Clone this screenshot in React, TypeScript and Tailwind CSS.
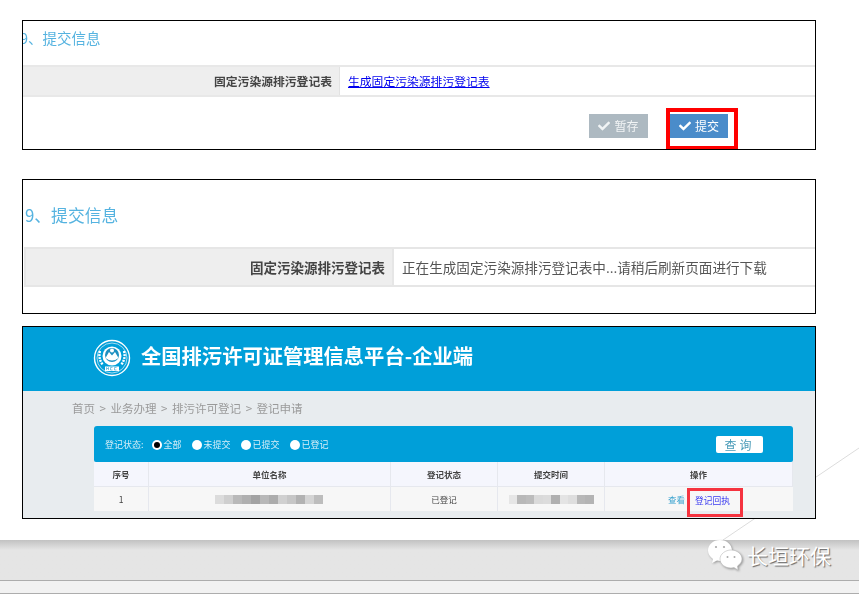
import React from "react";
import { FaCheck } from "react-icons/fa";

const FONT = "font-['Noto_Sans_CJK_SC','Noto_Sans',sans-serif]";

function Logo() {
  return (
    <svg width="38" height="38" viewBox="0 0 38 38" className="mb-[2px] shrink-0">
      <circle cx="19" cy="19" r="17.5" fill="none" stroke="#fff" strokeWidth="1.4" />
      <circle cx="19" cy="19" r="15" fill="none" stroke="#cfeaf6" strokeWidth="0.8" />
      <circle cx="19" cy="17" r="9.5" fill="#fff" />
      <circle cx="19" cy="16" r="7" fill="#1d8fc0" />
      <path d="M12.5 19 L16 13 L19 16.5 L22 13 L25.5 19 Q19 24 12.5 19Z" fill="#fff" />
      <circle cx="19" cy="11.5" r="2" fill="#fff" />
      <path d="M7 12 Q5 20 10 26 M31 12 Q33 20 28 26" fill="none" stroke="#fff" strokeWidth="2.4" strokeDasharray="2 1" />
      <rect x="12" y="27.5" width="14" height="4.5" fill="#fff" />
      <path d="M13.5 31 v-2.5 l1 1.5 l1-1.5 v2.5 M17.5 28.5 h2 M17.5 31 h2 M17.5 28.5 v2.5 M21.5 28.5 h2 M21.5 31 h2 M21.5 28.5 v2.5" stroke="#0b8fc6" strokeWidth="0.5" fill="none" />
    </svg>
  );
}

function Radio({ label, on }: { label: string; on?: boolean }) {
  return (
    <span className="flex items-center gap-[2px]">
      <span className="flex h-[10px] w-[10px] items-center justify-center rounded-full bg-white">
        {on && <span className="h-[6px] w-[6px] rounded-full bg-black" />}
      </span>
      <span>{label}</span>
    </span>
  );
}

function Wechat() {
  return (
    <svg width="36" height="32" viewBox="0 0 36 32" className="shrink-0 drop-shadow-[1px_1px_1px_rgba(0,0,0,0.35)]">
      <path d="M13 1 C6 1 1 6 1 11.5 C1 15 3 18 6 20 L5 24 L10 21.5 C11 21.8 12 22 13 22 C20 22 25 17 25 11.5 C25 6 20 1 13 1Z" fill="#fff" />
      <path d="M24 11 C18.5 11 13 15 13 20 C13 25 18 29 24 29 C25 29 26 28.8 27 28.5 L31 31 L30.5 27 C33 25 35 23 35 20 C35 15 30 11 24 11Z" fill="#fff" stroke="#bbb" strokeWidth="0.6" />
      <circle cx="9" cy="8" r="1.1" fill="#aaa" />
      <circle cx="17" cy="8" r="1.1" fill="#aaa" />
      <circle cx="20.5" cy="18" r="1" fill="#aaa" />
      <circle cx="27.5" cy="18" r="1" fill="#aaa" />
    </svg>
  );
}

const mosaic = ["bg-[#dcdcdc]", "bg-[#cfcfcf]", "bg-[#b9b9b9]", "bg-[#b0b0b0]", "bg-[#a3a3a3]", "bg-[#b8b8b8]", "bg-[#acacac]", "bg-[#d0d0d0]", "bg-[#c6c6c6]", "bg-[#b2b2b2]", "bg-[#d4d4d4]", "bg-[#bdbdbd]"];
const mosaic2 = ["bg-[#e6e6e6]", "bg-[#b8b8b8]", "bg-[#bcbcbc]", "bg-[#dadada]", "bg-[#dcdcdc]", "bg-[#b0b0b0]", "bg-[#e4e4e4]", "bg-[#dedede]", "bg-[#b8b8b8]", "bg-[#b4b4b4]"];

export default function App() {
  return (
    <div className={`relative h-[594px] w-[859px] overflow-hidden bg-white ${FONT}`}>
      <svg width="859" height="594" className="absolute left-0 top-0">
        <line x1="859" y1="448" x2="723" y2="540" stroke="#dcdcdc" strokeWidth="1" />
      </svg>

      <div className="relative flex flex-col pl-[22px] pt-[20px]">
        {/* block 1 */}
        <section className="relative h-[130px] w-[794px] overflow-hidden border border-black bg-white">
          <div className="blur-[0.3px]">
            <h2 className="ml-[-3px] mt-[7px] h-[20px] whitespace-nowrap text-[14.5px] font-normal leading-[20px] text-[#55b3e0]">9、提交信息</h2>
            <div className="mt-[17px] flex h-[32px] border-y-2 border-[#e8e8e8] text-[11.8px]">
              <div className="flex w-[317px] items-center justify-end border-r border-[#e2e2e2] bg-[#eeeeee] pr-[7px] font-bold text-[#444]">
                固定污染源排污登记表
              </div>
              <div className="flex items-center pl-[8px]">
                <a className="text-[#0000ee] underline">生成固定污染源排污登记表</a>
              </div>
            </div>
            <div className="flex justify-end pr-[87px] pt-[17px] text-[12px] text-white">
              <button className="mr-[22px] flex h-[24px] w-[59px] items-center justify-center gap-[4px] bg-[#adb9c1] text-[#f1f4f5]">
                <FaCheck className="text-[12px]" />暂存
              </button>
              <button className="flex h-[24px] w-[58px] items-center justify-center gap-[4px] bg-[#4a8cca]">
                <FaCheck className="text-[12px]" />提交
              </button>
            </div>
          </div>
          <div className="absolute left-[643px] top-[87px] h-[42px] w-[72px] border-4 border-[#ff0000]" />
        </section>

        {/* block 2 */}
        <section className="mt-[29px] h-[135px] w-[794px] overflow-hidden border border-black bg-white">
          <div className="blur-[0.3px]">
            <h2 className="ml-[2px] mt-[23px] h-[24px] whitespace-nowrap text-[16.8px] font-normal leading-[24px] text-[#55b3e0]">9、提交信息</h2>
            <div className="ml-[1px] mt-[20px] flex h-[40px] border-y-2 border-l-2 border-[#e6e6e6]">
              <div className="flex w-[368px] items-center justify-end border-r-2 border-[#e6e6e6] bg-[#eeeeee] pr-[7px] text-[13.5px] font-bold text-[#444]">
                固定污染源排污登记表
              </div>
              <div className="flex items-center whitespace-nowrap pl-[8px] text-[13.6px] text-[#555]">
                正在生成固定污染源排污登记表中...请稍后刷新页面进行下载
              </div>
            </div>
          </div>
        </section>

        {/* block 3 */}
        <section className="mt-[12px] h-[193px] w-[794px] overflow-hidden border border-black bg-[#e8ecef]">
          <div className="flex h-full flex-col blur-[0.4px]">
            <header className="flex h-[64px] shrink-0 items-center gap-[10px] bg-[#009fd9] pl-[70px]">
              <Logo />
              <h1 className="mb-[7px] whitespace-nowrap text-[20.3px] font-bold text-white">全国排污许可证管理信息平台-企业端</h1>
            </header>
            <div className="pl-[49px] pt-[9px] text-[11.5px] leading-[17px] text-[#9a9a9a] [word-spacing:2px]">
              首页 &gt; 业务办理 &gt; 排污许可登记 &gt; 登记申请
            </div>
            <div className="ml-[71px] mt-[9px] w-[699px]">
              <div className="flex h-[36px] items-center rounded-t-[3px] rounded-b-[2px] bg-[#009fd9] pl-[11px] pr-[30px] pt-[1px] text-[9px] text-[#d5eef8]">
                <span className="mr-[8px]">登记状态:</span>
                <span className="flex gap-[10px]">
                  <Radio label="全部" on />
                  <Radio label="未提交" />
                  <Radio label="已提交" />
                  <Radio label="已登记" />
                </span>
                <button className="ml-auto flex h-[17px] w-[47px] items-center justify-center rounded-[2px] bg-white text-[12px] tracking-[3px] text-[#4a9bb8]">查询</button>
              </div>
              <div className="grid h-[49px] grid-cols-[55px_242px_107px_107px_188px] grid-rows-[25px_24px] text-center text-[8.5px] text-[#444]">
                {["序号", "单位名称", "登记状态", "提交时间", "操作"].map((t) => (
                  <div key={t} className="flex items-center justify-center border-b border-r border-[#e6e8ee] bg-[#f5f6fd] font-bold">{t}</div>
                ))}
                <div className="flex items-center justify-center border-r border-[#e6e8ee] bg-[#f7f7f7]">1</div>
                <div className="flex items-center justify-center border-r border-[#e6e8ee] bg-[#f7f7f7] pr-[1px]">
                  <span className="flex h-[9px]">
                    {mosaic.map((c, i) => <span key={i} className={`h-full w-[9px] ${c}`} />)}
                  </span>
                </div>
                <div className="flex items-center justify-center border-r border-[#e6e8ee] bg-[#f7f7f7]">已登记</div>
                <div className="flex items-center justify-center border-r border-[#e6e8ee] bg-[#f7f7f7]">
                  <span className="flex h-[9px]">
                    {mosaic2.map((c, i) => <span key={i} className={`h-full w-[8.5px] ${c}`} />)}
                  </span>
                </div>
                <div className="relative flex items-center bg-[#f7f7f7] pl-[63px] leading-[12px]">
                  <span className="text-[#3aa3cf]">查看</span>
                  <span className="ml-[10px] mt-[3px] text-[8.75px] leading-[12px] text-[#3b3bf0]">登记回执</span>
                  <div className="absolute left-[82px] top-[1px] h-[29px] w-[56px] border-[3px] border-[#f5333f]" />
                </div>
              </div>
            </div>
          </div>
        </section>
      </div>

      {/* bottom band */}
      <div className="relative mt-[21px] flex h-[54px] flex-col">
        <div className="h-[40px] bg-gradient-to-b from-[#c2c2c2] from-0% via-[#e5e5e5] via-25% to-[#e5e5e5]" />
        <div className="h-[13px] border-t border-[#adadad] bg-[#f2f2f2]" />
        <div className="h-px bg-[#adadad]" />
      </div>

      <div className="absolute left-[707px] top-[539px] flex items-center gap-[4px]">
        <Wechat />
        <span className="whitespace-nowrap text-[21px] leading-[32px] text-white [text-shadow:1px_1px_1px_rgba(0,0,0,0.55)]">长垣环保</span>
      </div>
    </div>
  );
}
